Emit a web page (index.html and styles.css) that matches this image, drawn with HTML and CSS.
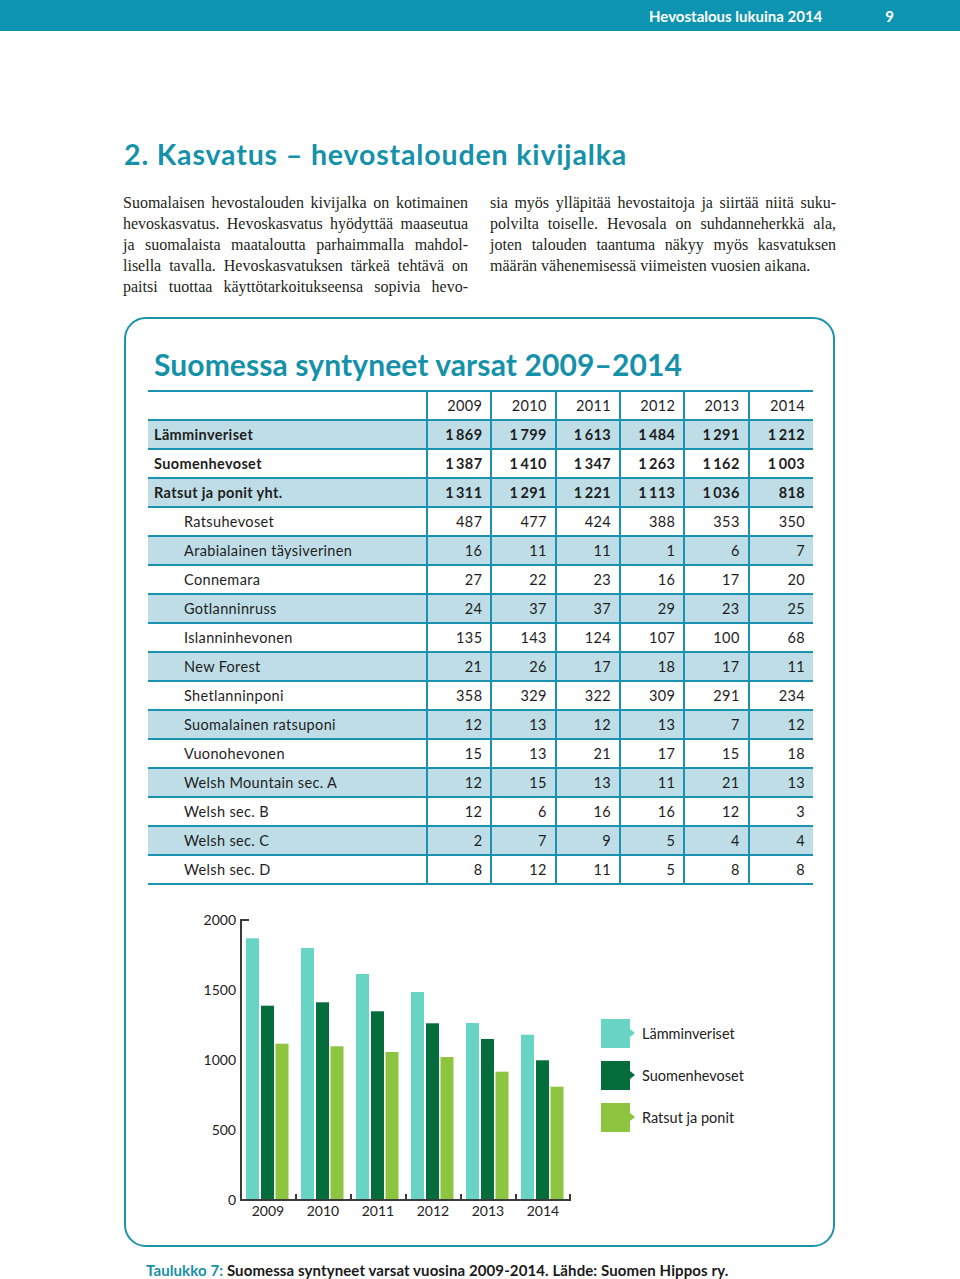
FILE: index.html
```html
<!DOCTYPE html>
<html lang="fi">
<head>
<meta charset="utf-8">
<title>Hevostalous lukuina 2014</title>
<link rel="stylesheet" href="styles.css">
</head>
<body>
<header class="topbar">
  <span class="topbar-title">Hevostalous lukuina 2014</span>
  <span class="topbar-page">9</span>
</header>
<main class="page">
  <h1 class="chapter">2. Kasvatus – hevostalouden kivijalka</h1>
  <div class="intro">
    <div class="col">
      <span class="ln">Suomalaisen hevostalouden kivijalka on kotimainen</span>
      <span class="ln">hevoskasvatus. Hevoskasvatus hyödyttää maaseutua</span>
      <span class="ln">ja suomalaista maataloutta parhaimmalla mahdol-</span>
      <span class="ln">lisella tavalla. Hevoskasvatuksen tärkeä tehtävä on</span>
      <span class="ln">paitsi tuottaa käyttötarkoitukseensa sopivia hevo-</span>
    </div>
    <div class="col">
      <span class="ln">sia myös ylläpitää hevostaitoja ja siirtää niitä suku-</span>
      <span class="ln">polvilta toiselle. Hevosala on suhdanneherkkä ala,</span>
      <span class="ln">joten talouden taantuma näkyy myös kasvatuksen</span>
      <span class="ln last">määrän vähenemisessä viimeisten vuosien aikana.</span>
    </div>
  </div>

  <section class="box">
    <h2 class="box-title">Suomessa syntyneet varsat 2009–2014</h2>
    <table class="stats">
      <colgroup>
        <col class="c-label"><col class="c-y"><col class="c-y"><col class="c-y"><col class="c-y"><col class="c-y"><col class="c-y">
      </colgroup>
      <thead>
        <tr><th></th><th>2009</th><th>2010</th><th>2011</th><th>2012</th><th>2013</th><th>2014</th></tr>
      </thead>
      <tbody>
        <tr class="main sh"><td>Lämminveriset</td><td>1&thinsp;869</td><td>1&thinsp;799</td><td>1&thinsp;613</td><td>1&thinsp;484</td><td>1&thinsp;291</td><td>1&thinsp;212</td></tr>
        <tr class="main"><td>Suomenhevoset</td><td>1&thinsp;387</td><td>1&thinsp;410</td><td>1&thinsp;347</td><td>1&thinsp;263</td><td>1&thinsp;162</td><td>1&thinsp;003</td></tr>
        <tr class="main sh"><td>Ratsut ja ponit yht.</td><td>1&thinsp;311</td><td>1&thinsp;291</td><td>1&thinsp;221</td><td>1&thinsp;113</td><td>1&thinsp;036</td><td>818</td></tr>
        <tr class="sub"><td>Ratsuhevoset</td><td>487</td><td>477</td><td>424</td><td>388</td><td>353</td><td>350</td></tr>
        <tr class="sub sh"><td>Arabialainen täysiverinen</td><td>16</td><td>11</td><td>11</td><td>1</td><td>6</td><td>7</td></tr>
        <tr class="sub"><td>Connemara</td><td>27</td><td>22</td><td>23</td><td>16</td><td>17</td><td>20</td></tr>
        <tr class="sub sh"><td>Gotlanninruss</td><td>24</td><td>37</td><td>37</td><td>29</td><td>23</td><td>25</td></tr>
        <tr class="sub"><td>Islanninhevonen</td><td>135</td><td>143</td><td>124</td><td>107</td><td>100</td><td>68</td></tr>
        <tr class="sub sh"><td>New Forest</td><td>21</td><td>26</td><td>17</td><td>18</td><td>17</td><td>11</td></tr>
        <tr class="sub"><td>Shetlanninponi</td><td>358</td><td>329</td><td>322</td><td>309</td><td>291</td><td>234</td></tr>
        <tr class="sub sh"><td>Suomalainen ratsuponi</td><td>12</td><td>13</td><td>12</td><td>13</td><td>7</td><td>12</td></tr>
        <tr class="sub"><td>Vuonohevonen</td><td>15</td><td>13</td><td>21</td><td>17</td><td>15</td><td>18</td></tr>
        <tr class="sub sh"><td>Welsh Mountain sec. A</td><td>12</td><td>15</td><td>13</td><td>11</td><td>21</td><td>13</td></tr>
        <tr class="sub"><td>Welsh sec. B</td><td>12</td><td>6</td><td>16</td><td>16</td><td>12</td><td>3</td></tr>
        <tr class="sub sh"><td>Welsh sec. C</td><td>2</td><td>7</td><td>9</td><td>5</td><td>4</td><td>4</td></tr>
        <tr class="sub"><td>Welsh sec. D</td><td>8</td><td>12</td><td>11</td><td>5</td><td>8</td><td>8</td></tr>
      </tbody>
    </table>

    <div class="chart-row">
      <svg class="chart" width="400" height="320" viewBox="0 0 400 320" aria-label="Pylväskaavio">
        <g class="ylabels">
          <text x="46" y="19">2000</text>
          <text x="46" y="89">1500</text>
          <text x="46" y="159">1000</text>
          <text x="46" y="229">500</text>
          <text x="46" y="299">0</text>
        </g>
        <g class="bars">
          <rect class="b1" x="56" y="32.3" width="13" height="261.7"/>
          <rect class="b2" x="71" y="99.7" width="13" height="194.3"/>
          <rect class="b3" x="85.5" y="137.7" width="13" height="156.3"/>

          <rect class="b1" x="111" y="42" width="13" height="252"/>
          <rect class="b2" x="126" y="96.3" width="13" height="197.7"/>
          <rect class="b3" x="140.5" y="140.3" width="13" height="153.7"/>

          <rect class="b1" x="166" y="68" width="13" height="226"/>
          <rect class="b2" x="181" y="105.3" width="13" height="188.7"/>
          <rect class="b3" x="195.5" y="146" width="13" height="148"/>

          <rect class="b1" x="221" y="86" width="13" height="208"/>
          <rect class="b2" x="236" y="117.3" width="13" height="176.7"/>
          <rect class="b3" x="250.5" y="151" width="13" height="143"/>

          <rect class="b1" x="276" y="117" width="13" height="177"/>
          <rect class="b2" x="291" y="133" width="13" height="161"/>
          <rect class="b3" x="305.5" y="165.7" width="13" height="128.3"/>

          <rect class="b1" x="331" y="128.7" width="13" height="165.3"/>
          <rect class="b2" x="346" y="154.3" width="13" height="139.7"/>
          <rect class="b3" x="360.5" y="180.7" width="13" height="113.3"/>
        </g>
        <path class="axis" d="M59 14 H51 V294 H380 M106 288 V294 M161 288 V294 M216 288 V294 M271 288 V294 M326 288 V294 M380 288 V295"/>
        <g class="xlabels">
          <text x="78" y="310">2009</text>
          <text x="133" y="310">2010</text>
          <text x="188" y="310">2011</text>
          <text x="243" y="310">2012</text>
          <text x="298" y="310">2013</text>
          <text x="353" y="310">2014</text>
        </g>
      </svg>
      <ul class="legend">
        <li><span class="swatch s1"></span>Lämminveriset</li>
        <li><span class="swatch s2"></span>Suomenhevoset</li>
        <li><span class="swatch s3"></span>Ratsut ja ponit</li>
      </ul>
    </div>
  </section>

  <p class="caption"><span class="cap-label">Taulukko 7:</span> Suomessa syntyneet varsat vuosina 2009-2014. Lähde: Suomen Hippos ry.</p>
</main>
</body>
</html>
```

FILE: styles.css
```css
* { box-sizing: border-box; }

html, body {
  margin: 0;
  padding: 0;
  background: #ffffff;
}

body {
  font-family: Lato, "Open Sans", "DejaVu Sans", sans-serif;
  color: #1e1e1e;
}

.topbar {
  height: 31px;
  background: #0c94b0;
  display: flex;
  justify-content: flex-end;
  align-items: center;
  padding-right: 66px;
  gap: 63px;
  color: #ffffff;
  font-weight: 700;
  font-size: 15px;
}

.page {
  margin-left: 123px;
  width: 713px;
}

.chapter {
  margin: 106px 0 0 1px;
  font-size: 28.5px;
  line-height: 34px;
  font-weight: 700;
  color: #1591aa;
  letter-spacing: 0.85px;
}

.intro {
  margin-top: 21px;
  display: grid;
  grid-template-columns: 345px 346px;
  column-gap: 22px;
  font-family: "Liberation Serif", "Times New Roman", serif;
  font-size: 16px;
  line-height: 21px;
  color: #231f20;
}

.ln {
  display: block;
  white-space: nowrap;
  text-align: justify;
  text-align-last: justify;
}

.ln.last {
  text-align-last: left;
}

.box {
  margin-top: 20px;
  margin-left: 1px;
  width: 711px;
  border: 2px solid #1c93ad;
  border-radius: 22px;
  padding: 27px 20px 19px 22px;
}

.box-title {
  margin: 0 0 8px 6px;
  font-size: 30px;
  line-height: 36px;
  font-weight: 700;
  color: #1591aa;
  letter-spacing: 0.1px;
}

.stats {
  width: 665px;
  border-collapse: collapse;
  table-layout: fixed;
  font-size: 14.5px;
  letter-spacing: 0.35px;
  border-top: 2px solid #1b93b0;
}

.c-label { width: 279px; }
.c-y { width: 64.3px; }

.stats th,
.stats td {
  height: 29px;
  padding: 0 8px 0 0;
  text-align: right;
  border-bottom: 2px solid #1b93b0;
  border-left: 2px solid #1b93b0;
  white-space: nowrap;
  font-weight: 400;
}

.stats th:first-child,
.stats td:first-child {
  border-left: none;
  text-align: left;
}

.stats tr.sh td { background: #bedde6; }

.stats tr.main td { font-weight: 700; }
.stats tr.main td:first-child { padding-left: 6px; }
.stats tr.sub td:first-child { padding-left: 36px; }

.chart-row {
  display: flex;
  align-items: flex-start;
  margin-top: 21px;
  margin-left: 42px;
}

.chart { display: block; }

.chart text {
  font-family: Lato, "Open Sans", sans-serif;
  font-size: 14px;
  fill: #222222;
}

.ylabels text { text-anchor: end; }
.xlabels text { text-anchor: middle; }

.axis {
  fill: none;
  stroke: #3a3a3a;
  stroke-width: 2;
}

.b1 { fill: #67d4c4; }
.b2 { fill: #056c3b; }
.b3 { fill: #8dc540; }

.legend {
  list-style: none;
  margin: 113px 0 0 11px;
  padding: 0;
  display: flex;
  flex-direction: column;
  gap: 13px;
  font-size: 14.5px;
  color: #222222;
}

.legend li {
  display: flex;
  align-items: center;
  height: 29px;
}

.swatch {
  position: relative;
  width: 29px;
  height: 29px;
  margin-right: 12px;
}

.swatch::after {
  content: "";
  position: absolute;
  right: -5px;
  top: 10px;
  border-top: 4.5px solid transparent;
  border-bottom: 4.5px solid transparent;
  border-left: 5px solid currentColor;
}

.s1 { background: #67d4c4; color: #67d4c4; }
.s2 { background: #056c3b; color: #056c3b; }
.s3 { background: #8dc540; color: #8dc540; }

.caption {
  margin: 13px 0 0 23px;
  font-size: 15px;
  line-height: 20px;
  font-weight: 700;
  letter-spacing: 0.1px;
  color: #1a1a1a;
}

.cap-label { color: #1591aa; }
```
